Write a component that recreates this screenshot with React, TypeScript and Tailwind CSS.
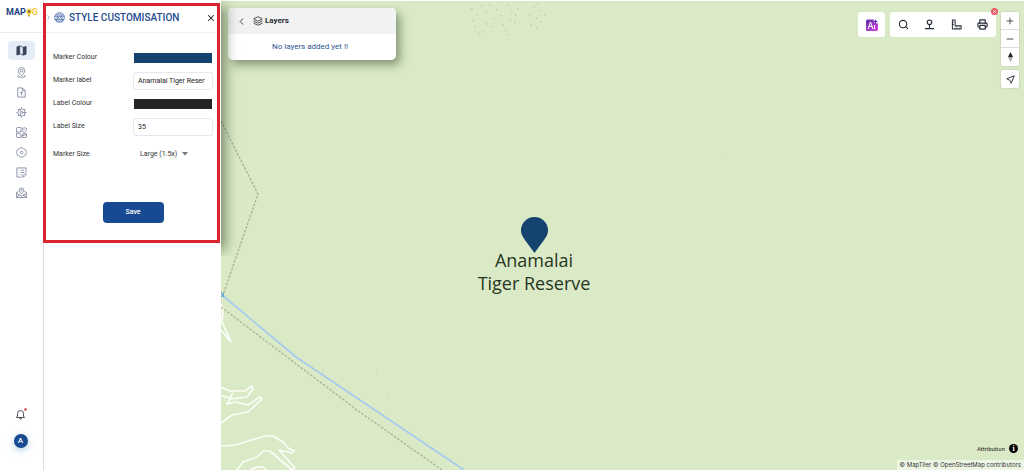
import { memo, type ReactNode } from "react";
import { ChevronLeft, ChevronRight, Layers, Minus, Plus, Printer, Search, X } from "lucide-react";

interface NavItem {
  label: string;
  active?: boolean;
  icon: ReactNode;
}

const navItems: NavItem[] = [
  {
    label: "Maps",
    active: true,
    icon: (
      <>
        <path d="M2 4l6-2v18l-6 2z" fill="currentColor" />
        <path d="M8 2l8 3v17l-8-3" />
        <path d="M16 5l6-2v17l-6 2z" fill="currentColor" />
      </>
    ),
  },
  {
    label: "Places",
    icon: (
      <>
        <path d="M12 19c-4-4-7-7-7-11a7 7 0 0 1 14 0c0 4-3 7-7 11z" />
        <circle cx="12" cy="8" r="3" />
        <path d="M6 18c-3 1-3 4 0 4h12c3 0 3-3 0-4" />
      </>
    ),
  },
  {
    label: "Upload",
    icon: (
      <>
        <path d="M14 2H4v20h16V8zM14 2v6h6" />
        <path d="M12 18v-7M9 13l3-3 3 3" />
      </>
    ),
  },
  {
    label: "Process",
    icon: (
      <>
        <circle cx="12" cy="12" r="8" />
        <circle cx="12" cy="12" r="2.500" />
        <path d="M12 1v3M12 20v3M1 12h3M20 12h3M4 4l2.500 2.500M17.500 17.500L20 20M4 20l2.500-2.500M17.500 6.500L20 4M14 12h6M11 10L8 5M11 14l-3 5" />
      </>
    ),
  },
  {
    label: "Dashboards",
    icon: (
      <>
        <path d="M11 1H4a3 3 0 0 0-3 3v7h10zM1 14v6a3 3 0 0 0 3 3h7v-6l-5-3zM14 15h9v5a3 3 0 0 1-3 3h-6z" />
        <path d="M18 13c-3-3-4-5-4-7a4 4 0 0 1 9 0c0 2-2 4-5 7zM18 5v2M14 19l9-3" />
      </>
    ),
  },
  {
    label: "Settings",
    icon: (
      <>
        <path d="M9 2h6l2 2 4 2 1 4 1 2-1 2-1 4-4 2-2 2H9l-2-2-4-2-1-4-1-2 1-2 1-4 4-2z" />
        <circle cx="12" cy="12" r="3" />
      </>
    ),
  },
  {
    label: "Tasks",
    icon: (
      <>
        <path d="M22 12V2H2v20h10" />
        <path d="M6 7h1M10 7h8M6 12h1M10 12h8M6 17h1M10 17h4M15 22l1-4 5-4 2 2-5 5z" />
      </>
    ),
  },
  {
    label: "Shared maps",
    icon: (
      <>
        <path d="M12 15c-4-4-5-6-5-8a5 5 0 0 1 10 0c0 2-1 4-5 8z" />
        <circle cx="12" cy="7" r="1.500" />
        <path d="M6 10l-5 2v11h22V12l-5-2M1 14l11 6 11-6M1 23l7-6M23 23l-7-6" />
      </>
    ),
  },
];

const Logo = () => (
  <a href="#" aria-label="MAPOG" className="flex items-center pl-[6px] text-[9px] leading-3 font-bold text-[#1e4380]">
    <span>MAP</span>
    <svg viewBox="0 0 12 18" className="h-[9px] w-[6px] shrink-0">
      <path d="M6 1a6 6 0 0 0-4 10l2 3h4l2-3a6 6 0 0 0-4-10z" fill="#f4cf45" />
      <circle cx="6" cy="7" r="2.500" fill="#78703f" />
      <path d="M4 14h4v3H4z" fill="#c6a63d" />
    </svg>
    <span className="text-[#f2cc3e]">G</span>
  </a>
);

const Sidebar = () => (
  <aside className="flex w-[43px] shrink-0 flex-col bg-white">
    <div className="flex h-[33px] items-center border-b border-[#ebedef] pb-2">
      <Logo />
    </div>
    <nav className="mt-2 flex flex-col items-center gap-px">
      {navItems.map((item) => (
        <button
          key={item.label}
          aria-label={item.label}
          className={`flex h-[19px] w-[27px] items-center justify-center rounded-sm ${
            item.active ? "mb-[2px] bg-[#e4edf7] text-[#39435b]" : "text-[#717a96]"
          }`}
        >
          <svg viewBox="0 0 24 24" fill="none" stroke="currentColor" strokeWidth="1.700" strokeLinejoin="round" className="size-[11px]">
            {item.icon}
          </svg>
        </button>
      ))}
    </nav>
    <div className="mt-auto mb-[22px] flex flex-col items-center gap-[14px] pr-[2px]">
      <button aria-label="Notifications" className="text-[#4b4f58]">
        <svg viewBox="0 0 24 24" fill="none" stroke="currentColor" strokeWidth="2" className="size-3">
          <path d="M3 19h16l-2-3v-5a6 6 0 0 0-12 0v5zM9 20c0 3 4 3 4 0" />
          <circle cx="21" cy="3" r="2.500" fill="#d6374a" stroke="none" />
        </svg>
      </button>
      <button className="size-[14px] rounded-full bg-[#174a8f] text-[8px] leading-[14px] font-medium text-white shadow-[0_2px_6px_rgba(90,160,200,0.5)]">
        A
      </button>
    </div>
  </aside>
);

const labelClass = "w-20 shrink-0 text-[#333]";
const fieldClass = "h-[18px] w-full min-w-0 rounded-[3px] border border-[#e6e7ef] bg-white pr-[7px] pl-1 text-[#222] outline-none";

const StylePanel = () => (
  <div className="z-10 flex w-[178px] shrink-0 flex-col border-l border-[#dcdee1] bg-white">
    {/* the shadow falls on the map side only */}
    <div className="-ml-px h-64 pt-[3px] shadow-[10px_0_12px_-6px_rgba(50,70,40,0.6)] [clip-path:inset(0_-30px_0_0)]">
      <section className="mr-px h-60 border-3 border-[#d8242f] bg-white">
        <header className="flex h-[27px] items-center border-b border-[#f0f1f3] pb-[3px]">
          <ChevronRight className="-ml-px size-[7px] text-[#8da4cb]" strokeWidth={3} />
          <svg viewBox="0 0 24 24" fill="none" stroke="#456aa8" strokeWidth="1.800" className="mr-1 ml-[2px] size-[11px]">
            <circle cx="12" cy="12" r="10.500" />
            <path d="M1 9h22M2 16h20M5 4l4 5M19 4l-4 5M7 22l-2-6M17 22l2-6" />
            <circle cx="8" cy="12" r="2" />
            <circle cx="16" cy="12" r="2" />
            <path d="M8 18c2 2 6 2 8 0M9 5h6" />
          </svg>
          <h2 className="flex-1 text-[10px] font-medium whitespace-nowrap text-[#234a8e]">STYLE CUSTOMISATION</h2>
          <button aria-label="Close" className="pr-px text-[#222]">
            <X className="size-[10px]" strokeWidth={2.5} />
          </button>
        </header>
        <form className="pt-[13px] pr-1 pl-[7px] text-[7px]">
          <div className="flex h-[23px] items-center">
            <label htmlFor="marker-colour" className={labelClass}>Marker Colour</label>
            <button id="marker-colour" type="button" className="mx-px h-2.5 flex-1 bg-[#13436e]" />
          </div>
          <div className="flex h-[23px] items-center">
            <label htmlFor="marker-label" className={labelClass}>Marker label</label>
            <input id="marker-label" type="text" defaultValue="Anamalai Tiger Reserve" className={fieldClass} />
          </div>
          <div className="flex h-[23px] items-center">
            <label htmlFor="label-colour" className={labelClass}>Label Colour</label>
            <button id="label-colour" type="button" className="mx-px h-2.5 flex-1 bg-[#252525]" />
          </div>
          <div className="flex h-[23px] items-center">
            <label htmlFor="label-size" className={labelClass}>Label Size</label>
            <input id="label-size" type="text" defaultValue="35" className={fieldClass} />
          </div>
          <div className="mt-1 flex h-6 items-center">
            <label htmlFor="marker-size" className={labelClass}>Marker Size</label>
            <div className="flex items-center pl-[7px]">
              <select id="marker-size" defaultValue="1.5" className="appearance-none text-[#333] outline-none">
                <option value="1">Medium (1x)</option>
                <option value="1.5">Large (1.5x)</option>
              </select>
              <svg viewBox="0 0 6 4" className="ml-[2px] h-1 w-1.5">
                <path d="M0 0h6L3 3.500z" fill="#777" />
              </svg>
            </div>
          </div>
          <button
            type="submit"
            className="mx-auto mt-[36px] flex h-[21px] w-[61px] items-center justify-center rounded-[4px] bg-[#174a92] font-medium text-white"
          >
            Save
          </button>
        </form>
      </section>
    </div>
  </div>
);

const scrub: [number, number][] = [
  [250, 7], [255, 13], [251, 19], [253, 25], [260, 4], [264, 11], [261, 30], [268, 3], [272, 17], [270, 25], [275, 8],
  [279, 14], [281, 23], [284, 29], [286, 3], [290, 9], [288, 18], [294, 13], [293, 21], [307, 14], [309, 23], [312, 5],
  [315, 16], [318, 9], [319, 20], [323, 13], [315, 26], [286, 33], [265, 22], [257, 32], [296, 7], [316, 2],
];

const MapCanvas = () => (
  <svg viewBox="0 0 803 469" preserveAspectRatio="xMinYMin slice" fill="none" className="absolute inset-0 size-full">
    {scrub.map(([x, y]) => (
      <rect key={`${x}-${y}`} x={x} y={y} width="1.500" height="1.500" fill="#bfd2ab" />
    ))}
    <path d="M155 373h1M504 153h1M102 370h1M166 394h1" stroke="#b5c8a1" />
    <g stroke="#fbfdf8" strokeWidth="1.700" strokeLinejoin="round">
      <path d="M0 303L2 309 1 321 10 341 0 329" />
      <path d="M0 386L9 390H24L31 385 32 388 26 396 9 398 6 403 14 401 27 404 39 396 41 398 27 411 11 414 0 422" />
      <path d="M0 395L9 397 12 392" />
      <path d="M0 445L14 444 44 435H52L62 441 67 447 73 450 71 452 58 449 74 467 71 469 49 450H42L36 456 22 461 16 469" />
      <path d="M29 469L36 466H42L45 469" />
    </g>
    <path d="M0 120L37 193 2 294" stroke="#a8ae9f" strokeWidth="1.300" strokeDasharray="2.500 1.500" />
    <path d="M0 306L136 409 221 469" stroke="#abb296" strokeWidth="1.300" strokeDasharray="2.500 1.500" />
    <path d="M1 294L75 356 243 469" stroke="#a6caed" strokeWidth="1.700" />
    <path d="M0 291l3 5M3 292l-3 4" stroke="#4a90d9" />
  </svg>
);

const Marker = () => (
  <div className="absolute top-[216px] left-[313px] flex -translate-x-1/2 flex-col items-center">
    <svg viewBox="0 0 27 36" className="h-9 w-[27px]">
      <path d="M13.500 0A13.300 13.300 0 0 0 0 13.500C0 20 6 25 13.500 36 21 25 27 20 27 13.500A13.300 13.300 0 0 0 13.500 0z" fill="#13436e" />
    </svg>
    <p className="-mt-1 w-[118px] text-center font-['Open_Sans',sans-serif] text-[18px] leading-[23px] text-[#26351f]">
      Anamalai Tiger Reserve
    </p>
  </div>
);

const LayersCard = () => (
  <section className="h-[52px] w-[168px] overflow-hidden rounded-[5px] bg-white text-[#2b2e33]">
    <header className="flex h-[26px] items-center bg-[#f1f2f2] pl-2">
      <button aria-label="Back">
        <ChevronLeft className="size-[11px]" />
      </button>
      <Layers className="mr-[2px] ml-1.5 size-[10px]" />
      <h2 className="text-[8px] font-bold">Layers</h2>
    </header>
    <p className="pt-[9px] pr-1 text-center text-[8px] leading-2 text-[#2d5491]">No layers added yet !!</p>
  </section>
);

const zoomButton = "flex size-[18px] items-center justify-center bg-white";

const MapControls = () => (
  <div className="flex items-start gap-[5px] pt-1 text-[#222b38]">
    <button aria-label="AI assistant" className="flex h-[25px] w-[27px] items-center justify-center rounded-[3px] bg-white">
      <svg viewBox="0 0 24 24" className="size-3">
        <defs>
          <linearGradient id="ai" x1="0" y1="0" x2="1" y2="1">
            <stop offset="0" stopColor="#5731a6" />
            <stop offset="1" stopColor="#df45e4" />
          </linearGradient>
        </defs>
        <path d="M3 1h12l2 7 7 1v12a3 3 0 0 1-3 3H3a3 3 0 0 1-3-3V4a3 3 0 0 1 3-3z" fill="url(#ai)" />
        <path d="M4 20L9 6l5 14M6 15h6M17 12v8" fill="none" stroke="#fff" strokeWidth="2" />
        <path d="M19 0l1.500 3.500L24 5l-3.500 1.500L19 10l-1.500-3.500L14 5l3.500-1.500z" fill="#6033b5" />
      </svg>
    </button>
    <div className="relative flex h-[25px] w-[106px] items-center justify-around rounded-[3px] bg-white">
      <button aria-label="Search"><Search className="size-[11px]" strokeWidth={2.3} /></button>
      <button aria-label="Street view">
        <svg viewBox="0 0 24 24" fill="none" stroke="currentColor" strokeWidth="2.300" className="size-[11px]">
          <circle cx="12" cy="7" r="5" />
          <path d="M12 12v9M2 21h20" />
        </svg>
      </button>
      <button aria-label="Measure">
        <svg viewBox="0 0 24 24" fill="none" stroke="currentColor" strokeWidth="2.200" strokeLinejoin="round" className="size-[11px]">
          <path d="M3 2h6v13h13v7H3zM3 7h3M3 12h3M9 22v-3M13 22v-3M18 22v-3" />
        </svg>
      </button>
      <button aria-label="Print"><Printer className="size-[11px]" strokeWidth={2.5} /></button>
      <button aria-label="Close tools" className="absolute -top-1 -right-[2px] flex size-[7px] items-center justify-center rounded-full bg-[#e85d66] text-white">
        <X className="size-[5px]" strokeWidth={3} />
      </button>
    </div>
    <div className="flex flex-col gap-1">
      <div className="divide-y divide-[#dddddd] overflow-hidden rounded-[2px] bg-white shadow-[0_0_2px_rgba(0,0,0,0.2)]">
        <button aria-label="Zoom in" className={zoomButton}><Plus className="size-[10px]" strokeWidth={2} /></button>
        <button aria-label="Zoom out" className={zoomButton}><Minus className="size-[10px]" strokeWidth={2} /></button>
        <button aria-label="Reset north" className={zoomButton}>
          <svg viewBox="0 0 10 20" className="h-2.5 w-[5px]">
            <path d="M5 0L10 10H0z" fill="#222" />
            <path d="M0 10h10L5 20z" fill="#aaa" />
          </svg>
        </button>
      </div>
      <button aria-label="Locate me" className={`${zoomButton} rounded-[2px] shadow-[0_0_2px_rgba(0,0,0,0.2)]`}>
        <svg viewBox="0 0 24 24" fill="none" stroke="currentColor" strokeWidth="2.500" strokeLinejoin="round" className="size-[9px]">
          <path d="M22 2L2 10l8 4 4 8z" />
        </svg>
      </button>
    </div>
  </div>
);

const App = () => (
  <div className="flex h-screen min-h-80 overflow-hidden bg-white pb-[3px] font-[Roboto,sans-serif]">
    <Sidebar />
    <StylePanel />
    <main className="relative mt-px flex min-w-0 flex-1 flex-col justify-between overflow-hidden bg-[#daeac7]">
      <MapCanvas />
      <Marker />
      <div className="relative flex items-start justify-between pt-[7px] pr-[5px] pl-[7px]">
        <div className="rounded-[5px] shadow-[4px_5px_10px_rgba(50,70,40,0.5)]">
          <LayersCard />
        </div>
        <MapControls />
      </div>
      <footer className="relative flex flex-col items-end text-[#333]">
        <div className="flex items-center gap-1 pr-[6px] pb-[7px] text-[6px] text-[#222]">
          Attribution
          <button aria-label="Attribution details" className="flex size-[9px] items-center justify-center rounded-full bg-black font-['Liberation_Serif',serif] text-[8px] leading-[9px] font-bold text-white">
            i
          </button>
        </div>
        <p className="bg-white/50 px-[3px] font-[Inter,sans-serif] text-[6px] leading-[10px]">
          <a href="#">© MapTiler</a> <a href="#">© OpenStreetMap contributors</a>
        </p>
      </footer>
    </main>
  </div>
);

export default memo(App);
